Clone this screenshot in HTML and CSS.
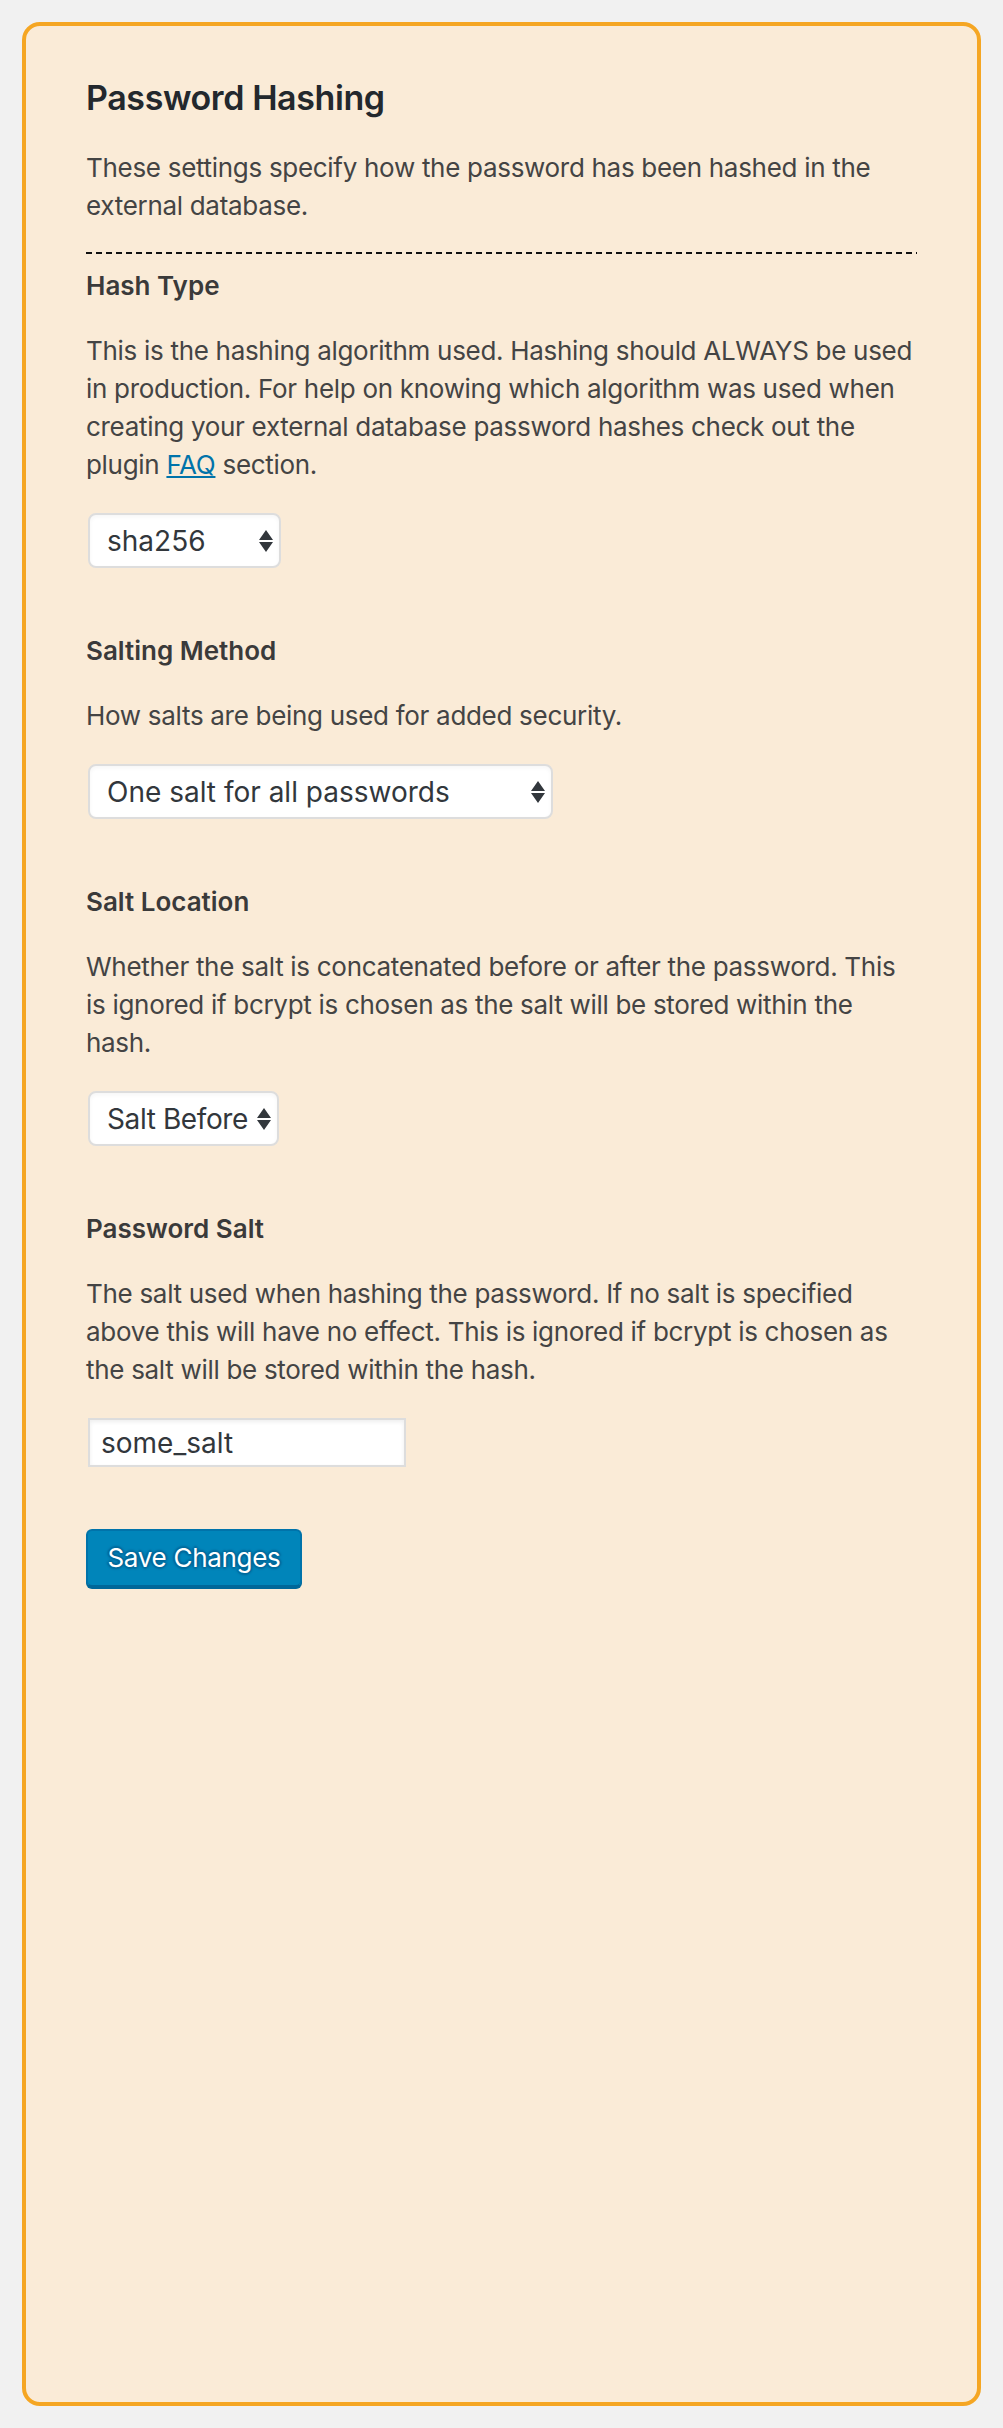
FILE: index.html
```html
<!DOCTYPE html>
<html lang="en">
<head>
<meta charset="utf-8">
<title>Password Hashing</title>
<link rel="stylesheet" href="styles.css">
</head>
<body>
<form class="panel">
  <h2 class="panel__title">Password Hashing</h2>
  <p class="panel__intro">These settings specify how the password has been hashed in the external database.</p>
  <div class="divider"></div>

  <div class="field">
    <label class="field__label" for="hash-type">Hash Type</label>
    <p class="field__desc">This is the hashing algorithm used. Hashing should ALWAYS be used in production. For help on knowing which algorithm was used when creating your external database password hashes check out the plugin <a class="field__link" href="#">FAQ</a> section.</p>
    <div class="select select--hash">
      <select id="hash-type" class="select__control"><option>sha256</option></select>
      <svg class="select__arrows" width="14" height="22" viewBox="0 0 14 22"><path d="M7 0 L14 10 L0 10 Z M0 12 L14 12 L7 22 Z" fill="#32373c"/></svg>
    </div>
  </div>

  <div class="field">
    <label class="field__label" for="salt-method">Salting Method</label>
    <p class="field__desc">How salts are being used for added security.</p>
    <div class="select select--method">
      <select id="salt-method" class="select__control"><option>One salt for all passwords</option></select>
      <svg class="select__arrows" width="14" height="22" viewBox="0 0 14 22"><path d="M7 0 L14 10 L0 10 Z M0 12 L14 12 L7 22 Z" fill="#32373c"/></svg>
    </div>
  </div>

  <div class="field">
    <label class="field__label" for="salt-location">Salt Location</label>
    <p class="field__desc">Whether the salt is concatenated before or after the password. This is ignored if bcrypt is chosen as the salt will be stored within the hash.</p>
    <div class="select select--location">
      <select id="salt-location" class="select__control"><option>Salt Before</option></select>
      <svg class="select__arrows" width="14" height="22" viewBox="0 0 14 22"><path d="M7 0 L14 10 L0 10 Z M0 12 L14 12 L7 22 Z" fill="#32373c"/></svg>
    </div>
  </div>

  <div class="field">
    <label class="field__label" for="salt">Password Salt</label>
    <p class="field__desc">The salt used when hashing the password. If no salt is specified above this will have no effect. This is ignored if bcrypt is chosen as the salt will be stored within the hash.</p>
    <input id="salt" class="text-input" type="text" value="some_salt">
  </div>

  <div class="actions">
    <button type="button" class="button-primary">Save Changes</button>
  </div>
</form>
</body>
</html>
```

FILE: styles.css
```css
* {
  box-sizing: border-box;
}

html,
body {
  margin: 0;
  padding: 0;
}

body {
  background: #f1f1f1;
  padding: 22px 22px 22px 22px;
  font-family: "Inter", "Liberation Sans", sans-serif;
  color: #444;
}

.panel {
  display: flex;
  flex-direction: column;
  align-items: flex-start;
  min-height: 2384px;
  background: #faebd7;
  border: 4px solid #f5a623;
  border-radius: 18px;
  padding: 50px 60px 40px 60px;
}

.panel__title {
  margin: 0 0 29px 0;
  font-size: 34px;
  line-height: 44px;
  font-weight: 600;
  letter-spacing: -0.4px;
  color: #23282d;
}

.panel__intro,
.field__desc {
  margin: 0;
  max-width: 832px;
  font-size: 26px;
  line-height: 38px;
  letter-spacing: -0.3px;
  color: #444;
}

.divider {
  align-self: stretch;
  height: 2px;
  margin: 27px 0 13px 0;
  background: repeating-linear-gradient(to right, #111 0 6px, transparent 6px 10px);
}

.field {
  display: flex;
  flex-direction: column;
  align-items: flex-start;
  margin-bottom: 64px;
}

.field__label {
  display: block;
  font-size: 26px;
  line-height: 38px;
  font-weight: 600;
  color: #3a3a3a;
  margin-bottom: 27px;
}

.field__desc {
  margin-bottom: 29px;
}

.field__link {
  color: #0073aa;
  text-decoration: underline;
}

.select {
  position: relative;
  margin-left: 2px;
}

.select__control {
  appearance: none;
  -webkit-appearance: none;
  display: block;
  height: 55px;
  margin: 0;
  padding: 0 30px 0 17px;
  background: #fff;
  border: 2px solid #ddd;
  border-radius: 8px;
  box-shadow: inset 0 2px 4px rgba(0, 0, 0, 0.04);
  font-family: "Inter", "Liberation Sans", sans-serif;
  font-size: 28px;
  color: #32373c;
}

.select--hash .select__control {
  width: 193px;
}

.select--method .select__control {
  width: 465px;
}

.select--location .select__control {
  width: 191px;
  padding-right: 6px;
  letter-spacing: -0.4px;
}

.select__arrows {
  position: absolute;
  right: 8px;
  top: 17px;
  pointer-events: none;
}

.text-input {
  display: block;
  width: 318px;
  height: 49px;
  margin: 0 0 0 2px;
  padding: 0 11px;
  background: #fff;
  border: 2px solid #ddd;
  box-shadow: inset 0 2px 4px rgba(0, 0, 0, 0.07);
  font-family: "Inter", "Liberation Sans", sans-serif;
  font-size: 28px;
  color: #32373c;
}

.actions {
  margin-top: -2px;
}

.button-primary {
  display: block;
  width: 216px;
  height: 58px;
  margin: 0;
  padding: 0 0 2px 0;
  background: #0085ba;
  border: 2px solid #0073aa;
  border-bottom-color: #006799;
  border-radius: 6px;
  box-shadow: 0 2px 0 #006799;
  color: #fff;
  font-family: "Inter", "Liberation Sans", sans-serif;
  font-size: 26px;
  letter-spacing: -0.3px;
  text-shadow: 0 -2px 2px #006799, 2px 0 2px #006799, 0 2px 2px #006799, -2px 0 2px #006799;
  cursor: pointer;
}
```
